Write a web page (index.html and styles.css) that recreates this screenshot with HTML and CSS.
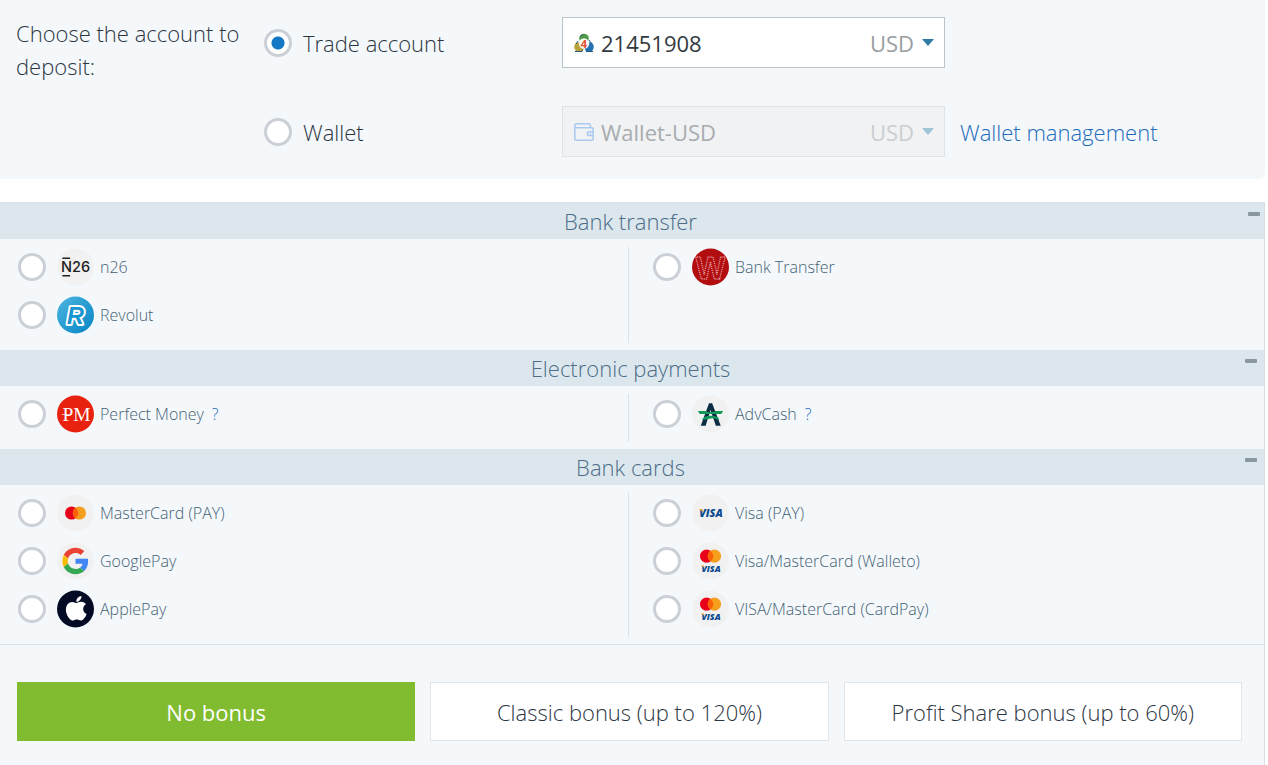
FILE: index.html
```html
<!DOCTYPE html>
<html lang="en">
<head>
<meta charset="utf-8">
<title>Deposit</title>
<link rel="stylesheet" href="styles.css">
</head>
<body>
<form class="page">
  <section class="account">
    <p class="account-title">Choose the account to deposit:</p>
    <label class="account-option"><input class="radio" type="radio" name="account" checked>Trade account</label>
    <div class="field">
      <svg class="field-icon" viewBox="0 0 20 20" aria-hidden="true">
        <circle cx="10" cy="5.500" r="4.800" fill="#4f9a49"/>
        <circle cx="5" cy="14" r="4.800" fill="#b9a13b"/>
        <circle cx="15" cy="14" r="4.800" fill="#2372b0"/>
        <path d="M1 18.500h7l1-2M12 18.500h7M6 4l3-3M2 11l2-3M15 7l3 4" fill="none" stroke="#28577a" stroke-width="1"/>
        <circle cx="10" cy="10.500" r="5.200" fill="#f5f7f2"/>
        <text class="mt-digit" x="10" y="14.500">4</text>
      </svg>
      <select class="field-select" aria-label="Trade account number"><option>21451908</option></select>
      <span class="currency">USD</span>
      <svg class="caret" viewBox="0 0 12 7" aria-hidden="true"><path d="M0 0h12L6 7z"/></svg>
    </div>
    <label class="account-option account-option-wallet"><input class="radio" type="radio" name="account">Wallet</label>
    <div class="field field-disabled">
      <svg class="field-icon" viewBox="0 0 20 20" fill="none" stroke="#a9c9f0" stroke-width="1.500" aria-hidden="true">
        <path d="M.8 4.500V17q0 1.300 1.300 1.300h15.600q1.500 0 1.500-1.300V7.300q0-1.500-1.500-1.500H2Q.8 5.800.8 4.300 .8 1.700 2.500 1.700h12.300q1.600 0 1.600 1.600v2.500"/>
        <path d="M19.200 9.800h-4.500q-1.200 0-1.200 1.200v1.400q0 1.200 1.200 1.200h4.500M16 11.700h1"/>
      </svg>
      <select class="field-select" aria-label="Wallet" disabled><option>Wallet-USD</option></select>
      <span class="currency">USD</span>
      <svg class="caret" viewBox="0 0 12 7" aria-hidden="true"><path d="M0 0h12L6 7z"/></svg>
    </div>
    <a class="wallet-link" href="#">Wallet management</a>
  </section>

  <section class="methods">
    <header class="group-head group-head-first"><h2 class="group-title">Bank transfer</h2><button class="collapse" type="button" aria-label="Collapse bank transfer"></button></header>
    <div class="group">
      <div class="column">
        <label class="method"><input class="radio" type="radio" name="method">
          <svg class="logo" viewBox="0 0 38 38" aria-hidden="true"><circle cx="19" cy="19" r="19" fill="#f1f1f1"/><text class="n26" x="19" y="24.500">N26</text><path d="M5.500 10h8M5.500 28h8" stroke="#222" stroke-width="1.400"/></svg>
          <span>n26</span></label>
        <label class="method"><input class="radio" type="radio" name="method">
          <svg class="logo" viewBox="0 0 38 38" aria-hidden="true"><defs><linearGradient id="revolut" x1="0" y1="0" x2="1" y2="1"><stop offset="0" stop-color="#4db5df"/><stop offset="1" stop-color="#0785c6"/></linearGradient></defs><circle cx="19" cy="19" r="19" fill="url(#revolut)"/><text class="revolut" x="19" y="28">R</text></svg>
          <span>Revolut</span></label>
      </div>
      <div class="column">
        <label class="method"><input class="radio" type="radio" name="method">
          <svg class="logo" viewBox="0 0 38 38" aria-hidden="true"><circle cx="19" cy="19" r="19" fill="#b20e10"/><text class="wire" x="19" y="31">W</text></svg>
          <span>Bank Transfer</span></label>
      </div>
    </div>

    <header class="group-head"><h2 class="group-title">Electronic payments</h2><button class="collapse" type="button" aria-label="Collapse electronic payments"></button></header>
    <div class="group">
      <div class="column">
        <div class="method"><input class="radio" type="radio" name="method" id="pm">
          <svg class="logo" viewBox="0 0 38 38" aria-hidden="true"><circle cx="19" cy="19" r="19" fill="#e8220f"/><text class="pm" x="20" y="26">PM</text><path d="M5 19.500h7" stroke="#fff" stroke-width=".7"/></svg>
          <label for="pm">Perfect Money</label><a class="help" href="#" aria-label="About Perfect Money">?</a></div>
      </div>
      <div class="column">
        <div class="method"><input class="radio" type="radio" name="method" id="adv">
          <svg class="logo" viewBox="0 0 38 38" aria-hidden="true"><circle cx="19" cy="19" r="19" fill="#f1f1f1"/><path d="M9 31L17.500 8h3.200L29.500 31h-5L19 15 14 31z" fill="#0c2c44"/><path d="M6 16h9.500l-1 3H8zM23 16h9l-2 3h-6zM14.500 17h9l.8 2h-10.500zM10 25q3-4 8-4.200 6-.2 9 1.700l1 3q-4-2.500-9-2-5 1.500-9 1.500z" fill="#139a5b"/></svg>
          <label for="adv">AdvCash</label><a class="help" href="#" aria-label="About AdvCash">?</a></div>
      </div>
    </div>

    <header class="group-head"><h2 class="group-title">Bank cards</h2><button class="collapse" type="button" aria-label="Collapse bank cards"></button></header>
    <div class="group">
      <div class="column">
        <label class="method"><input class="radio" type="radio" name="method">
          <svg class="logo" viewBox="0 0 38 38" aria-hidden="true"><circle cx="19" cy="19" r="19" fill="#f1f1f1"/><circle cx="15" cy="19" r="6.800" fill="#e8001b"/><circle cx="23" cy="19" r="6.800" fill="#f69e1e"/><path d="M19 13.500a6.800 6.800 0 0 1 0 11 6.800 6.800 0 0 1 0-11z" fill="#fb5f08"/></svg>
          <span>MasterCard (PAY)</span></label>
        <label class="method"><input class="radio" type="radio" name="method">
          <svg class="logo" viewBox="0 0 38 38" aria-hidden="true"><circle cx="19" cy="19" r="19" fill="#f1f1f1"/><g transform="translate(5.500 5.500) scale(.563)"><path fill="#ea4335" d="M24 9.500c3.540 0 6.710 1.220 9.210 3.600l6.850-6.850C35.900 2.380 30.470 0 24 0 14.620 0 6.510 5.380 2.560 13.220l7.980 6.190C12.430 13.720 17.740 9.500 24 9.500z"/><path fill="#4285f4" d="M46.980 24.550c0-1.570-.15-3.090-.38-4.550H24v9.020h12.940c-.58 2.960-2.260 5.480-4.780 7.180l7.730 6c4.510-4.180 7.090-10.360 7.090-17.650z"/><path fill="#fbbc05" d="M10.530 28.590A14.500 14.500 0 0 1 9.770 24c0-1.600.28-3.140.76-4.590l-7.980-6.190A23.900 23.900 0 0 0 0 24c0 3.880.92 7.540 2.560 10.780z"/><path fill="#34a853" d="M24 48c6.480 0 11.930-2.130 15.890-5.810l-7.730-6c-2.150 1.450-4.920 2.300-8.160 2.300-6.260 0-11.570-4.220-13.470-9.910l-7.980 6.190C6.510 42.620 14.620 48 24 48z"/></g></svg>
          <span>GooglePay</span></label>
        <label class="method"><input class="radio" type="radio" name="method">
          <svg class="logo" viewBox="0 0 38 38" aria-hidden="true"><circle cx="19" cy="19" r="19" fill="#030b24"/><path fill="#fff" transform="translate(3 1.500) scale(1.400)" d="M17.050 20.280c-.98.950-2.050.8-3.080.35-1.090-.46-2.090-.48-3.240 0-1.440.62-2.200.44-3.060-.35C2.790 15.250 3.510 7.590 9.050 7.310c1.350.07 2.290.74 3.080.8 1.180-.24 2.310-.93 3.570-.84 1.510.12 2.650.72 3.400 1.800-3.120 1.870-2.380 5.980.48 7.130-.57 1.500-1.310 2.990-2.540 4.090zM12.030 7.250c-.15-2.230 1.660-4.070 3.740-4.250.29 2.580-2.340 4.500-3.740 4.250z"/></svg>
          <span>ApplePay</span></label>
      </div>
      <div class="column">
        <label class="method"><input class="radio" type="radio" name="method">
          <svg class="logo" viewBox="0 0 38 38" aria-hidden="true"><circle cx="19" cy="19" r="19" fill="#f1f1f1"/><text class="visa visa-large" x="19.500" y="23">VISA</text><path d="M7 15h3.500l1 3z" fill="#f1a72c"/></svg>
          <span>Visa (PAY)</span></label>
        <label class="method"><input class="radio" type="radio" name="method">
          <svg class="logo" viewBox="0 0 38 38" aria-hidden="true"><circle cx="19" cy="19" r="19" fill="#f1f1f1"/><circle cx="15" cy="14" r="6.800" fill="#e8001b"/><circle cx="23" cy="14" r="6.800" fill="#f69e1e"/><path d="M19 8.500a6.800 6.800 0 0 1 0 11 6.800 6.800 0 0 1 0-11z" fill="#fb5f08"/><text class="visa" x="19.500" y="30">VISA</text><path d="M9 23.500h3l1 2.500z" fill="#f1a72c"/></svg>
          <span>Visa/MasterCard (Walleto)</span></label>
        <label class="method"><input class="radio" type="radio" name="method">
          <svg class="logo" viewBox="0 0 38 38" aria-hidden="true"><circle cx="19" cy="19" r="19" fill="#f1f1f1"/><circle cx="15" cy="14" r="6.800" fill="#e8001b"/><circle cx="23" cy="14" r="6.800" fill="#f69e1e"/><path d="M19 8.500a6.800 6.800 0 0 1 0 11 6.800 6.800 0 0 1 0-11z" fill="#fb5f08"/><text class="visa" x="19.500" y="30">VISA</text><path d="M9 23.500h3l1 2.500z" fill="#f1a72c"/></svg>
          <span>VISA/MasterCard (CardPay)</span></label>
      </div>
    </div>

    <div class="bonuses">
      <button class="bonus bonus-active" type="button">No bonus</button>
      <button class="bonus" type="button">Classic bonus (up to 120%)</button>
      <button class="bonus" type="button">Profit Share bonus (up to 60%)</button>
    </div>
  </section>
</form>
</body>
</html>
```
FILE: styles.css
```css
* { box-sizing: border-box; }

body {
  margin: 0;
  background: #fff;
  color: #2c363f;
  font-family: "Open Sans", "Noto Sans", sans-serif;
  font-size: 22px;
  font-weight: 300;
}

.page {
  display: flex;
  flex-direction: column;
  gap: 23px;
  min-height: 100vh;
  padding-right: 3px;
}

.account {
  display: grid;
  grid-template-columns: 248fr 298fr 383fr 320fr;
  row-gap: 38px;
  align-items: center;
  padding: 17px 0 22px 16px;
  background: #f4f8fb;
  border-radius: 0 0 6px 0;
}

.account-title {
  grid-row: span 2;
  align-self: start;
  margin: 0;
  padding-right: 16px;
  line-height: 33px;
}

.account-option {
  display: flex;
  align-items: center;
  gap: 11px;
}

.account-option-wallet { grid-column: 2; }

.radio {
  appearance: none;
  flex: none;
  width: 28px;
  height: 28px;
  margin: 0;
  border: 3px solid #cbcfd6;
  border-radius: 50%;
  background: #fff;
}

.radio:checked { background: radial-gradient(circle, #1277c4 6px, #fff 7px); }

.field {
  display: flex;
  align-items: center;
  height: 51px;
  padding: 0 10px 0 11px;
  border: 1px solid #bac4cb;
  background: #fff;
  font-weight: 400;
}

.field-icon {
  flex: none;
  width: 20px;
  height: 20px;
  margin-right: 7px;
}

.field-select {
  appearance: none;
  flex: 1;
  min-width: 0;
  padding: 0;
  border: 0;
  background: none;
  color: #343a40;
  font: inherit;
}

.currency { color: #989da1; }

.caret {
  flex: none;
  width: 12px;
  height: 7px;
  margin-left: 8px;
  fill: #2e7ba6;
}

.field-disabled {
  border-color: #dde3e6;
  background: #f0f2f4;
}

.field-disabled .field-select { color: #a9acae; opacity: 1; }
.field-disabled .currency { color: #cbced0; }
.field-disabled .caret { fill: #9fc3d7; }

.wallet-link {
  padding-left: 15px;
  color: #1d6bb8;
  text-decoration: none;
}

.methods {
  flex: 1;
  border-top: 1px solid #d9e2e6;
  border-right: 1px solid #d9e0e4;
  background: #f4f8fb;
}

.group-head {
  display: grid;
  grid-template-columns: 16px 1fr 16px;
  padding-right: 3px;
  background: #dce7ed;
}

.group-title {
  grid-column: 2;
  margin: 0;
  color: #4c6c88;
  font-size: 22px;
  font-weight: 300;
  line-height: 36px;
  text-align: center;
}

.collapse {
  align-self: start;
  width: 12px;
  height: 4px;
  margin: 9px 0 0;
  padding: 0;
  border: 0;
  border-radius: 1px;
  background: #8a979e;
}

.group-head-first .collapse { margin-left: 3px; }

.group {
  display: grid;
  grid-template-columns: 628fr 636fr;
  padding: 8px 0 7px;
}

.column { padding-left: 18px; }

.column + .column {
  padding-left: 24px;
  border-left: 1px solid #dce3e8;
}

.method {
  display: flex;
  align-items: center;
  height: 48px;
  padding-bottom: 8px;
  color: #456173;
  font-size: 16px;
}

.logo {
  flex: none;
  width: 37px;
  height: 38px;
  margin: 0 6px 0 11px;
}

.help {
  margin-left: 8px;
  color: #1d6bb8;
  text-decoration: none;
}

.bonuses {
  display: grid;
  grid-template-columns: repeat(3, 1fr);
  gap: 15px;
  padding: 37px 22px 24px 17px;
  border-top: 1px solid #dbe2e7;
}

.bonus {
  height: 59px;
  padding: 0;
  border: 1px solid #e1e6ea;
  background: #fff;
  color: #2c363f;
  font: inherit;
}

.bonus-active {
  border-color: #81bb2f;
  background: #81bb2f;
  color: #fff;
  font-weight: 400;
}

.logo text, .mt-digit { text-anchor: middle; }

.mt-digit { fill: #e2502d; font: bold 11px "Open Sans", sans-serif; }
.n26 { fill: #222; font: 500 15px Inter, sans-serif; }
.revolut { fill: #1795d0; stroke: #fff; stroke-width: 4; stroke-linejoin: round; paint-order: stroke; font: italic bold 24px "Liberation Sans", sans-serif; }
.wire { fill: none; stroke: #f4caca; stroke-width: 1; stroke-dasharray: 1 1; font: bold 32px "Liberation Sans", sans-serif; }
.pm { fill: #fff; font: 20px "Liberation Serif", serif; }
.visa { fill: #0b4a8f; font: italic 800 9px "Open Sans", sans-serif; }
.visa-large { font-size: 11px; }
```
